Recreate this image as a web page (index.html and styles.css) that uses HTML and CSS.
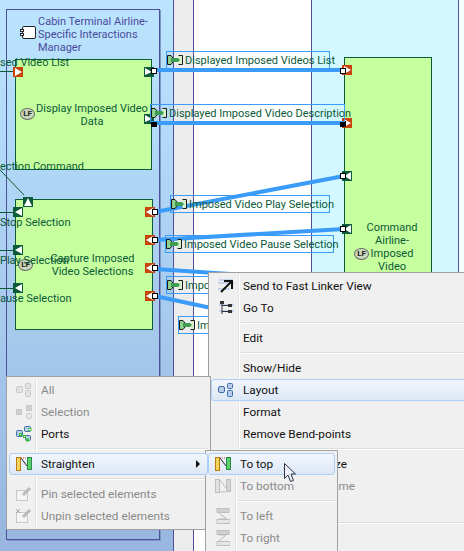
FILE: index.html
```html
<!DOCTYPE html>
<html>
<head>
<meta charset="utf-8">
<title>Diagram context menu</title>
<link rel="stylesheet" href="styles.css">
</head>
<body>
<main class="canvas">
  <div class="band band-blue"></div>
  <div class="band band-grey"></div>
  <div class="band band-white"></div>
  <div class="band band-cyan"></div>

  <div class="container"></div>
  <svg class="comp-icon" width="16" height="14" viewBox="0 0 16 14"><rect x="2.500" y=".5" width="13" height="12" rx="1.500" fill="#fff" stroke="#222"/><rect x=".5" y="3.500" width="3" height="2" fill="#fff" stroke="#222"/><rect x=".5" y="7.500" width="3" height="2" fill="#fff" stroke="#222"/></svg>
  <div class="container-title">Cabin Terminal Airline-Specific Interactions Manager</div>

  <div class="fn fn-a"><span class="lf lf-a">LF</span><span class="fn-text">Display Imposed Video Data</span></div>
  <div class="fn fn-b"><span class="lf lf-b">LF</span><span class="fn-text">Capture Imposed Video Selections</span></div>
  <div class="fn fn-c"><span class="lf lf-c">LF</span><span class="fn-text">Command Airline-Imposed Video</span></div>

  <svg class="wires" width="464" height="551" viewBox="0 0 464 551">
    <g stroke="#0b5a38" stroke-width="1" fill="none">
      <path d="M0 71.500H14M0 212.500H14M0 250.500H14M0 288.500H14M0 170L24 195"/>
    </g>
    <g stroke="#3a9cf8" stroke-width="4" fill="none">
      <path d="M155 70H344M155 123H344M155 212L344 176M155 240L344 229M155 269L230 274M155 296L230 312"/>
    </g>
  </svg>

  <span class="ext t1">sed Video List</span>
  <span class="ext t2">ection Command</span>
  <span class="ext t3">Stop Selection</span>
  <span class="ext t4">Play Selection</span>
  <span class="ext t5">ause Selection</span>

  <svg class="port p1" viewBox="0 0 10 10"><rect width="10" height="10" fill="#c8440f"/><path d="M2 1L9 5L2 9Z" fill="#fff"/></svg>
  <svg class="port p2" viewBox="0 0 10 10"><rect width="10" height="10" fill="#0b5a38"/><path d="M1 1L8 5L1 8Z" fill="#fff"/></svg>
  <svg class="port p3" viewBox="0 0 10 10"><rect width="10" height="10" fill="#0b5a38"/><path d="M1 1L8 5L1 8Z" fill="#fff"/></svg>
  <svg class="port p4" viewBox="0 0 10 10"><rect width="10" height="10" fill="#0b5a38"/><path d="M5 1L9 9H1Z" fill="#fff"/></svg>
  <svg class="port p5" viewBox="0 0 10 10"><rect width="10" height="10" fill="#0b5a38"/><path d="M9 1V9L2 5Z" fill="#fff"/></svg>
  <svg class="port p6" viewBox="0 0 10 10"><rect width="10" height="10" fill="#0b5a38"/><path d="M9 1V9L2 5Z" fill="#fff"/></svg>
  <svg class="port p7" viewBox="0 0 10 10"><rect width="10" height="10" fill="#0b5a38"/><path d="M9 1V9L2 5Z" fill="#fff"/></svg>
  <svg class="port p8" viewBox="0 0 10 10"><rect width="10" height="10" fill="#c8440f"/><path d="M8 1V9L1 5Z" fill="#fff"/></svg>
  <svg class="port p9" viewBox="0 0 10 10"><rect width="10" height="10" fill="#c8440f"/><path d="M8 1V9L1 5Z" fill="#fff"/></svg>
  <svg class="port p10" viewBox="0 0 10 10"><rect width="10" height="10" fill="#c8440f"/><path d="M8 1V9L1 5Z" fill="#fff"/></svg>
  <svg class="port p11" viewBox="0 0 10 10"><rect width="10" height="10" fill="#c8440f"/><path d="M8 1V9L1 5Z" fill="#fff"/></svg>
  <svg class="port p12" viewBox="0 0 10 10"><rect width="10" height="10" fill="#c8440f"/><path d="M2 1L9 5L2 9Z" fill="#fff"/></svg>
  <svg class="port p13" viewBox="0 0 10 10"><rect width="10" height="10" fill="#c8440f"/><path d="M2 1L9 5L2 9Z" fill="#fff"/></svg>
  <svg class="port p14" viewBox="0 0 10 10"><rect width="10" height="10" fill="#0b5a38"/><path d="M9 1V9L2 5Z" fill="#fff"/></svg>
  <svg class="port p15" viewBox="0 0 10 10"><rect width="10" height="10" fill="#0b5a38"/><path d="M9 1V9L2 5Z" fill="#fff"/></svg>

  <i class="handle h1"></i><i class="handle h2"></i><i class="handle h3"></i><i class="handle h4"></i>
  <i class="handle h5"></i><i class="handle h6"></i><i class="handle h7"></i><i class="handle h8"></i>
  <i class="handle dark h11"></i><i class="handle dark h12"></i>

  <div class="flow f1"><svg class="flow-icon" width="16" height="10" viewBox="0 0 16 10"><path d="M.5.5H4L6 3V7L4 9.500H.5Z" fill="#8fd08f" stroke="#1a1a1a"/><path d="M11.500.5H15.500V9.500H11.500" fill="#d8f0c8" stroke="#1a1a1a"/><path d="M4 3H11L13 5L11 7H4Z" fill="#3f9d4f"/></svg>Displayed Imposed Videos List</div>
  <div class="flow f2"><svg class="flow-icon" width="16" height="10" viewBox="0 0 16 10"><path d="M.5.5H4L6 3V7L4 9.500H.5Z" fill="#8fd08f" stroke="#1a1a1a"/><path d="M11.500.5H15.500V9.500H11.500" fill="#d8f0c8" stroke="#1a1a1a"/><path d="M4 3H11L13 5L11 7H4Z" fill="#3f9d4f"/></svg>Displayed Imposed Video Description</div>
  <div class="flow f3"><svg class="flow-icon" width="16" height="10" viewBox="0 0 16 10"><path d="M.5.5H4L6 3V7L4 9.500H.5Z" fill="#8fd08f" stroke="#1a1a1a"/><path d="M11.500.5H15.500V9.500H11.500" fill="#d8f0c8" stroke="#1a1a1a"/><path d="M4 3H11L13 5L11 7H4Z" fill="#3f9d4f"/></svg>Imposed Video Play Selection</div>
  <div class="flow f4"><svg class="flow-icon" width="16" height="10" viewBox="0 0 16 10"><path d="M.5.5H4L6 3V7L4 9.500H.5Z" fill="#8fd08f" stroke="#1a1a1a"/><path d="M11.500.5H15.500V9.500H11.500" fill="#d8f0c8" stroke="#1a1a1a"/><path d="M4 3H11L13 5L11 7H4Z" fill="#3f9d4f"/></svg>Imposed Video Pause Selection</div>
  <div class="flow f5"><svg class="flow-icon" width="16" height="10" viewBox="0 0 16 10"><path d="M.5.5H4L6 3V7L4 9.500H.5Z" fill="#8fd08f" stroke="#1a1a1a"/><path d="M11.500.5H15.500V9.500H11.500" fill="#d8f0c8" stroke="#1a1a1a"/><path d="M4 3H11L13 5L11 7H4Z" fill="#3f9d4f"/></svg>Impo</div>
  <div class="flow f6"><svg class="flow-icon" width="16" height="10" viewBox="0 0 16 10"><path d="M.5.5H4L6 3V7L4 9.500H.5Z" fill="#8fd08f" stroke="#1a1a1a"/><path d="M11.500.5H15.500V9.500H11.500" fill="#d8f0c8" stroke="#1a1a1a"/><path d="M4 3H11L13 5L11 7H4Z" fill="#3f9d4f"/></svg>Im</div>

  <nav class="menu menu-main">
    <div class="item"><span class="ico"><svg width="18" height="16" viewBox="0 0 18 16"><path d="M2 2H16M1 5H17M1 11H13" stroke="#c5d4ec" stroke-width="2"/><path d="M4 14L14 4M7 3H15V11" stroke="#111" stroke-width="2" fill="none"/></svg></span>Send to Fast Linker View</div>
    <div class="item"><span class="ico"><svg width="18" height="16" viewBox="0 0 18 16"><path d="M2 5H17M2 11H17" stroke="#c5d4ec" stroke-width="2"/><path d="M5 2V14M5 5.500H11M5 11.500H11" stroke="#333" fill="none"/><rect x="3" y="1" width="4" height="3" fill="#333"/><rect x="11" y="4" width="4" height="3" fill="#333"/><rect x="11" y="10" width="4" height="3" fill="#333"/></svg></span>Go To</div>
    <div class="sep"></div>
    <div class="item"><span class="ico"></span>Edit</div>
    <div class="sep"></div>
    <div class="item"><span class="ico"></span>Show/Hide</div>
    <div class="item hot"><span class="ico"><svg width="16" height="14" viewBox="0 0 16 14"><rect x=".5" y="3.500" width="6" height="6" rx="1.500" fill="#b9cdea" stroke="#3d6ea8"/><rect x="9.500" y=".5" width="5" height="5" rx="1" fill="#b9cdea" stroke="#3d6ea8"/><rect x="9.500" y="7.500" width="5" height="6" rx="1" fill="#b9cdea" stroke="#3d6ea8"/></svg></span>Layout</div>
    <div class="item"><span class="ico"></span>Format</div>
    <div class="item"><span class="ico"></span>Remove Bend-points</div>
    <div class="sep"></div>
    <div class="item"><span class="ico"></span><span class="tail-a">ze</span></div>
    <div class="item off"><span class="ico"></span><span class="tail-b">ame</span></div>
    <div class="item"><span class="ico"></span></div>
    <div class="sep"></div>
  </nav>

  <nav class="menu menu-left">
    <div class="item off"><span class="ico"><svg width="16" height="14" viewBox="0 0 16 14"><rect x=".5" y="3.500" width="6" height="6" rx="1" fill="#e2e2e2" stroke="#c8c8c8"/><rect x="9.500" y=".5" width="5" height="5" rx="1" fill="#e2e2e2" stroke="#c8c8c8"/><rect x="9.500" y="7.500" width="5" height="6" rx="1" fill="#e2e2e2" stroke="#c8c8c8"/></svg></span>All</div>
    <div class="item off"><span class="ico"><svg width="16" height="14" viewBox="0 0 16 14"><rect x=".5" y="4.500" width="5" height="5" fill="#d0d0d0" stroke="#c8c8c8"/><rect x="10.500" y=".5" width="5" height="5" fill="#d0d0d0" stroke="#c8c8c8"/><rect x="10.500" y="8.500" width="5" height="5" rx="1" fill="#e8e8e8" stroke="#c8c8c8"/></svg></span>Selection</div>
    <div class="item"><span class="ico"><svg width="16" height="16" viewBox="0 0 16 16"><rect x=".5" y="4.500" width="6" height="6" rx="1" fill="#b9cdea" stroke="#3d6ea8"/><rect x="8.500" y=".5" width="6" height="5" rx="1" fill="#b9cdea" stroke="#3d6ea8"/><rect x="9.500" y="9.500" width="5" height="5" rx="1" fill="#b9cdea" stroke="#3d6ea8"/><g fill="#fff" stroke="#2ec02e"><rect x="3.500" y="7.500" width="2" height="2"/><rect x="13" y="2.500" width="2" height="2"/><rect x="7.500" y="9.500" width="2" height="2"/><rect x="10.500" y="13" width="2" height="2"/></g></svg></span>Ports</div>
    <div class="sep"></div>
    <div class="item hot"><span class="ico"><svg width="16" height="14" viewBox="0 0 16 14"><rect x=".5" y=".5" width="4" height="13" fill="#f6d65a" stroke="#b87b12"/><rect x="11.500" y=".5" width="4" height="12" fill="#5ad06a" stroke="#2a8a4a"/><path d="M5 1L11 9" stroke="#222"/><path d="M5 1H11" stroke="#d04040" stroke-dasharray="1 1"/></svg></span>Straighten<span class="arrow"></span></div>
    <div class="sep"></div>
    <div class="item off"><span class="ico"><svg width="16" height="16" viewBox="0 0 16 16"><rect x=".5" y="4.500" width="11" height="10" fill="#f4f4f4" stroke="#c8c8c8"/><path d="M7 9L14 2" stroke="#b8b8b8" stroke-width="3"/></svg></span>Pin selected elements</div>
    <div class="item off"><span class="ico"><svg width="16" height="16" viewBox="0 0 16 16"><rect x=".5" y="4.500" width="11" height="10" fill="#f4f4f4" stroke="#c8c8c8"/><path d="M7 9L14 2" stroke="#b8b8b8" stroke-width="3"/><path d="M0 1L4 5M4 1L0 5" stroke="#a8a8a8"/></svg></span>Unpin selected elements</div>
  </nav>

  <nav class="menu menu-sub">
    <div class="item hot"><span class="ico"><svg width="16" height="14" viewBox="0 0 16 14"><rect x=".5" y=".5" width="4" height="13" fill="#f6d65a" stroke="#b87b12"/><rect x="11.500" y=".5" width="4" height="12" fill="#5ad06a" stroke="#2a8a4a"/><path d="M5 1L11 9" stroke="#222"/><path d="M5 1H11" stroke="#d04040" stroke-dasharray="1 1"/></svg></span>To top</div>
    <div class="item off"><span class="ico"><svg width="16" height="14" viewBox="0 0 16 14"><rect x=".5" y=".5" width="4" height="13" fill="#e2e2e2" stroke="#c0c0c0"/><rect x="11.500" y=".5" width="4" height="12" fill="#d4d4d4" stroke="#c0c0c0"/><path d="M5 1L11 9M5 13H11" stroke="#c0c0c0"/></svg></span>To bottom</div>
    <div class="sep"></div>
    <div class="item off"><span class="ico"><svg width="14" height="16" viewBox="0 0 14 16"><rect x="1" y=".5" width="12" height="4" fill="#d0d0d0" stroke="#c0c0c0"/><rect x="1" y="11.500" width="13" height="4" fill="#e6e6e6" stroke="#c0c0c0"/><path d="M3 5L11 11M3 11H10" stroke="#b8b8b8"/></svg></span>To left</div>
    <div class="item off"><span class="ico"><svg width="14" height="16" viewBox="0 0 14 16"><rect x="1" y=".5" width="12" height="4" fill="#d0d0d0" stroke="#c0c0c0"/><rect x="1" y="11.500" width="13" height="4" fill="#e6e6e6" stroke="#c0c0c0"/><path d="M10 5L3 11M3 5H10" stroke="#b8b8b8"/></svg></span>To right</div>
  </nav>

  <svg class="cursor" width="13" height="20" viewBox="0 0 13 20"><path d="M.5.5V15.500L4 12L6.500 18.500L9.500 17.500L7 11H11.500Z" fill="#eef1f7" stroke="#2c3348"/></svg>
</main>
</body>
</html>
```
FILE: styles.css
```css
html, body { margin: 0; padding: 0; }
.canvas {
  position: relative;
  width: 464px;
  height: 551px;
  overflow: hidden;
  background: #f2fdff;
  font-family: Roboto, "Noto Sans", sans-serif;
  font-size: 12px;
}
.band { position: absolute; top: 0; height: 551px; box-sizing: border-box; }
.band-blue { left: 0; width: 174px; background: linear-gradient(#bbe5ff, #98b6df); border-right: 1px solid #4f4f9c; }
.band-grey { left: 174px; width: 20px; background: #ececec; border-right: 1px solid #4f4f9c; }
.band-white { left: 194px; width: 117px; background: #fff; }
.band-cyan { left: 311px; width: 148px; background: #d4f8ff; border-left: 1px solid #4f4f9c; border-right: 1px solid #4f4f9c; }

.container {
  position: absolute; left: 6px; top: 9px; width: 154px; height: 531px; box-sizing: border-box;
  border: 1px solid #4f4f9c;
  box-shadow: 1px 1px 0 #7d97c5;
}
.comp-icon { position: absolute; left: 20px; top: 26px; }
.container-title {
  position: absolute; left: 38px; top: 15px; width: 112px;
  color: #4a4a9c; line-height: 13px; font-size: 11px;
}

.fn {
  position: absolute; box-sizing: border-box;
  background: #c6ff9e; border: 1px solid #0b5a38;
  color: #0b5a38; text-align: center;
  display: flex; align-items: center; justify-content: center;
  line-height: 13px; font-size: 11px;
}
.fn-text { display: block; }
.fn-a { left: 15px; top: 59px; width: 137px; height: 111px; padding: 0 3px 0 20px; }
.fn-b { left: 15px; top: 199px; width: 138px; height: 131px; padding: 0 3px 0 20px; }
.fn-b .fn-text { margin-top: 1px; }
.fn-c { left: 344px; top: 57px; width: 88px; height: 300px; align-items: flex-start; padding: 163px 14px 0 22px; }
.fn-c .fn-text { width: 60px; }
.lf {
  position: absolute; width: 13px; height: 10px; border-radius: 50%;
  border: 1px solid #666; background: #c8d8b8; color: #222;
  font-size: 8px; line-height: 10px; text-align: center; font-weight: 700;
}
.lf-a { left: 4px; top: 48px; }
.lf-b { left: 2px; top: 59px; }
.lf-c { left: 9px; top: 190px; }

.wires { position: absolute; left: 0; top: 0; }
.ext { position: absolute; color: #0b5a38; font-size: 11px; line-height: 13px; white-space: nowrap; }
.t1 { left: 0; top: 56px; }
.t2 { left: 0; top: 160px; }
.t3 { left: 0; top: 216px; }
.t4 { left: 0; top: 254px; }
.t5 { left: 0; top: 292px; }

.port { position: absolute; width: 10px; height: 10px; }
.p1 { left: 13px; top: 67px; }
.p2 { left: 144px; top: 67px; }
.p3 { left: 144px; top: 114px; }
.p4 { left: 23px; top: 197px; }
.p5 { left: 13px; top: 207px; }
.p6 { left: 13px; top: 245px; }
.p7 { left: 13px; top: 283px; }
.p8 { left: 145px; top: 207px; }
.p9 { left: 145px; top: 235px; }
.p10 { left: 145px; top: 263px; }
.p11 { left: 145px; top: 291px; }
.p12 { left: 342px; top: 65px; }
.p13 { left: 342px; top: 118px; }
.p14 { left: 342px; top: 171px; }
.p15 { left: 342px; top: 224px; }

.handle { position: absolute; width: 4px; height: 4px; background: #fff; border: 1px solid #000; }
.handle.dark { background: #000; }
.h1 { left: 151px; top: 68px; }
.h2 { left: 152px; top: 209px; }
.h3 { left: 152px; top: 237px; }
.h4 { left: 152px; top: 265px; }
.h5 { left: 152px; top: 293px; }
.h6 { left: 340px; top: 68px; }
.h7 { left: 340px; top: 173px; }
.h8 { left: 340px; top: 226px; }
.h11 { left: 151px; top: 121px; }
.h12 { left: 340px; top: 121px; }

.flow {
  position: absolute; box-sizing: border-box; height: 18px;
  display: flex; align-items: center; gap: 2px;
  padding: 0;
  border: 1px solid #3a9cf8;
  color: #0b5a38; font-size: 11px; white-space: nowrap;
}
.flow-icon { flex: none; }
.f1 { left: 166px; top: 51px; width: 164px; }
.f2 { left: 150px; top: 104px; width: 195px; }
.f3 { left: 170px; top: 195px; width: 160px; }
.f4 { left: 165px; top: 235px; width: 169px; }
.f5 { left: 166px; top: 276px; width: 60px; }
.f6 { left: 178px; top: 316px; width: 60px; }

.menu {
  position: absolute; box-sizing: border-box;
  background: #f0f0f0; border: 1px solid #a0a0a0;
  padding: 2px;
  display: flex; flex-direction: column;
  color: #111; font-size: 11.800px;
}
.menu::before { content: ""; position: absolute; top: 2px; bottom: 2px; width: 1px; background: #e4e4e4; box-shadow: 1px 0 0 #fff; }
.menu-main { left: 208px; top: 272px; width: 270px; height: 300px; }
.menu-main::before { left: 29px; }
.menu-left { left: 6px; top: 376px; width: 205px; height: 154px; }
.menu-left::before { left: 28px; }
.menu-sub { left: 205px; top: 450px; width: 133px; height: 120px; }
.menu-sub::before { left: 29px; }

.item {
  position: relative; box-sizing: border-box; height: 22px; flex: none;
  display: flex; align-items: center;
  border: 1px solid transparent; border-radius: 3px;
}
.ico { width: 31px; flex: none; display: flex; align-items: center; justify-content: center; padding-right: 4px; box-sizing: border-box; }
.item.off { color: #8a8a8a; }
.item.hot {
  background: linear-gradient(#f2f6fc, #dde8f6);
  border-color: #aecff7;
  z-index: 1;
}
.sep { height: 8px; flex: none; position: relative; margin-left: 30px; }
.sep::after { content: ""; position: absolute; left: 0; right: 0; top: 3px; height: 1px; background: #dcdcdc; box-shadow: 0 1px 0 #fff; }
.arrow { position: absolute; right: 7px; top: 6px; border-left: 4px solid #111; border-top: 4px solid transparent; border-bottom: 4px solid transparent; }
.tail-a { margin-left: 92px; }
.tail-b { margin-left: 89px; }
.cursor { position: absolute; left: 284px; top: 463px; z-index: 2; }
```
